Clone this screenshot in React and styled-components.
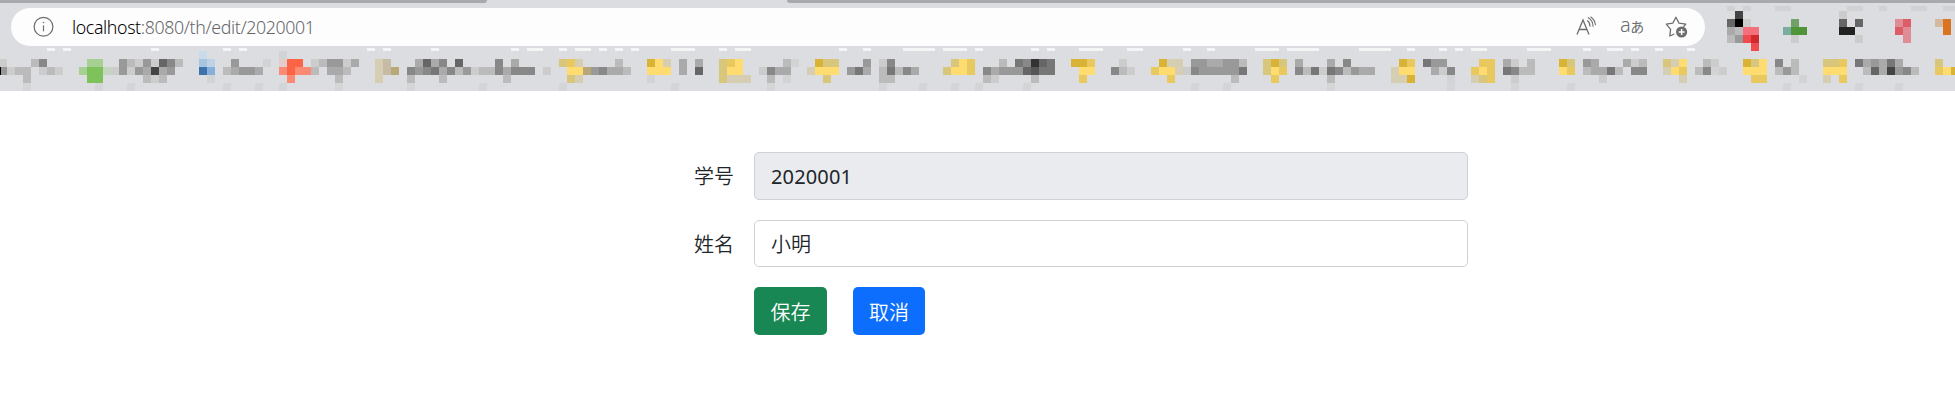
import React from 'react';
import styled, { createGlobalStyle } from 'styled-components';

const GlobalStyle = createGlobalStyle`
  * { box-sizing: border-box; }
  body {
    margin: 0;
    background: #fff;
    color: #212529;
    font-family: "Noto Sans", "Noto Sans CJK SC", sans-serif;
    font-size: 20px;
    overflow: hidden;
  }
`;

const Browser = styled.header`
  position: relative;
  height: 91px;
  background: #dcdde0;
`;

const TabStrip = styled.div`
  display: flex;
  justify-content: space-between;
  height: 3px;
`;

const TabEdge = styled.div`
  width: ${(p) => p.$width}px;
  background: #a8a9ac;
  border-radius: ${(p) => (p.$side === 'left' ? '0 0 4px 0' : '0 0 0 4px')};
`;

const AddressBar = styled.div`
  position: relative;
  display: flex;
  align-items: center;
  width: 1694px;
  height: 38px;
  margin: 5px 0 0 11px;
  padding: 0 16px 0 22px;
  border-radius: 19px;
  background: #fdfdfe;
  color: #6c6d6f;
`;

const Url = styled.span`
  flex: 1;
  margin-left: 17px;
  font-family: "Noto Sans", sans-serif;
  font-size: 17.75px;
  font-weight: 300;
  line-height: 24px;
  letter-spacing: -0.37px;
  color: #666769;
`;

const Host = styled.span`
  color: #000;
`;

const BarIcons = styled.div`
  display: flex;
  align-items: center;
  gap: 22px;
`;

const Mosaic = styled.svg`
  position: absolute;
  inset: 0;
  display: block;
`;

const Form = styled.form`
  display: grid;
  grid-template-columns: 40px 714px;
  column-gap: 20px;
  row-gap: 20px;
  margin: 61px 0 0 694px;
`;

const Label = styled.label`
  height: 48px;
  line-height: 50px;
  font-weight: 350;
  white-space: nowrap;
`;

const Input = styled.input`
  width: 100%;
  height: ${(p) => (p.readOnly ? 48 : 47)}px;
  padding: 0 16px;
  border: 1px solid #ced2d6;
  border-radius: 5px;
  outline: none;
  background: ${(p) => (p.readOnly ? '#e9ebee' : '#fff')};
  color: #212529;
  font: inherit;
  font-weight: ${(p) => (p.readOnly ? 400 : 350)};
  letter-spacing: ${(p) => (p.readOnly ? '0.15px' : '0')};
`;

const Actions = styled.div`
  grid-column: 2;
  display: flex;
  gap: 26px;
  margin-top: -1px;
`;

const Button = styled.button`
  width: ${(p) => p.$width}px;
  height: 48px;
  padding: 0;
  border: 0;
  border-radius: 5px;
  background: ${(p) => (p.$tone === 'success' ? '#198754' : '#0d6efd')};
  color: #fff;
  font: inherit;
  font-weight: 350;
`;

const COLORS = {
  G: '#7fc25b', H: '#a6d192', I: '#c3d6c0', B: '#3d73aa', C: '#88afd9', D: '#a5c5e0', E: '#bfd2e5',
  R: '#fb6545', S: '#fb8a74', T: '#e3cccb', Y: '#ffdc70', Z: '#e8c960', X: '#d8b336', W: '#d8c67d',
  V: '#d6ceb2', U: '#c6bca6', K: '#b9a877', N: '#f4707a', O: '#d2282c', P: '#ef4b4e', Q: '#4f9438',
  L: '#70a267', J: '#79ad9f', F: '#dc5c68', A: '#df8c94', t: '#d3b9a0', o: '#d97520', w: '#fdfdfe',
  d: '#d2d3d5', e: '#c9dae8',
};

const CELL = 8;

// Each entry is a row's top edge followed by [start column, cell colours] runs.
const ROWS = [
  [11, [[217, '4'], [230, 'c']]],
  [19, [[216, '60c'], [224, 'L'], [230, '6'], [232, '6'], [237, 'AF'], [242, 'to']]],
  [27, [[216, 'abNN'], [223, 'JQQ'], [230, '22'], [237, 'FA'], [243, 'o']]],
  [35, [[216, 'b9PO'], [224, 'c'], [232, 'c'], [238, 'A']]],
  [43, [[219, 'P']]],
  [51, [[25, 'e'], [35, 'd']]],
  [59, [
    [0, 'c'], [4, 'b8'], [11, 'HH'], [15, '9bc9c68b'], [25, 'DE'], [29, '9'], [33, 'd'],
    [35, 'TRR'], [39, 'cb99ca'], [47, 'VU'], [52, 'a6a8.6'], [62, '8.a'], [70, 'WZV'], [77, 'b'],
    [81, 'XYV'], [85, 'a.a'], [90, 'WZY'], [98, 'bd'], [102, 'XWW'], [108, '9'], [110, 'c8'],
    [119, 'WYZ'], [125, 'b'], [127, '78367'], [134, 'XXZ'], [140, 'c'], [145, 'XVV'],
    [149, '99aa99b'], [158, 'WXW'], [162, 'a'], [166, 'a.8'], [175, 'XZ'], [178, '799'],
    [185, 'ZZ'], [188, 'ac.b'], [195, 'XW'], [198, '9a'], [203, 'acb'], [208, 'WVY'], [213, 'bc'],
    [218, 'XWY'], [222, '8.b'], [228, 'WWZ'], [232, '7a9a7a'], [242, 'W'],
  ]],
  [67, [
    [0, '9cbb.cbc'], [10, 'HGGI'], [14, 'c9c9a4a9'], [25, 'BC'], [28, 'ba99a'], [35, 'SRSS'],
    [39, 'b.aab'], [47, 'VUK'], [51, '8987a8b9cbb'], [62, '8a888'], [68, 'c'], [71, 'YYK98aab'],
    [81, 'YYY'], [85, 'a.6'], [90, 'WYY'], [95, 'c8aa'], [101, 'VYYY'], [106, '97a'], [110, 'b7b8a'],
    [118, 'WYYZ'], [123, '8a9996577'], [135, 'YY'], [139, '8bc'], [144, 'ZYYVc8999997'],
    [158, 'WYZ'], [162, '8b7c78b9aa'], [174, 'VYY'], [179, 'ac8'], [184, 'ZYZ'], [188, '78bb'],
    [195, 'YZ'], [198, 'baa7b.88'], [208, 'VYZ'], [212, 'b8dc'], [218, 'YYY'], [222, 'b9b'],
    [228, 'YYY'], [233, 'b6a498b'], [242, 'ZYX'],
  ]],
  [75, [
    [3, 'b'], [11, 'GG'], [18, 'bcb'], [26, 'd'], [36, 'S'], [42, 'b'], [47, 'V'], [51, 'b...b'],
    [63, 'b'], [71, 'WV'], [81, 'd'], [90, 'WVVV'], [96, 'b.d'], [103, 'W'], [110, 'bb'],
    [123, 'bc'], [129, 'b'], [135, 'Z'], [146, 'Z'], [154, 'b'], [159, 'Z'], [166, 'b'],
    [174, 'VVX'], [181, 'd'], [184, 'VWZ'], [189, 'c'], [200, 'c'], [210, 'V'], [219, 'ZZ'],
    [225, 'd'], [228, 'V.Z'],
  ]],
];

const DASHES = [
  [6, 1], [8, 1], [19, 1], [28, 1], [30, 1], [46, 1], [48, 1], [54, 1], [64, 1], [66, 2], [70, 1],
  [72, 2], [75, 1], [77, 1], [79, 1], [84, 3], [90, 1], [92, 2], [105, 1], [108, 1], [113, 4],
  [118, 3], [122, 1], [129, 1], [131, 1], [135, 3], [141, 2], [148, 1], [151, 1], [157, 3],
  [161, 4], [170, 4], [176, 1], [180, 1], [182, 1], [184, 2], [191, 3], [198, 1], [201, 2],
  [204, 1], [207, 1], [211, 1],
];

const SMUDGES = [3, 12, 16, 28, 32, 35, 42, 51, 60, 70, 84, 96, 110, 115, 119, 122, 128, 149, 153, 166, 181, 189, 196, 223, 232, 237];

const fill = (c) => COLORS[c] || `#${c}${c}${c}`;

function PixelatedBookmarks() {
  return (
    <Mosaic width="1955" height="91" shapeRendering="crispEdges" aria-hidden="true">
      {DASHES.map(([c, n]) => (
        <rect key={`d${c}`} x={c * CELL - 1} y="48" width={n * CELL} height="3" fill="#f5f5f6" />
      ))}
      {SMUDGES.map((c) => (
        <rect key={`s${c}`} x={c * CELL - 1} y="83" width="8" height="8" fill="#d4d5d7" />
      ))}
      {[[216, 1], [218, 1], [222, 2], [231, 2], [235, 1], [239, 2], [243, 2]].map(([c, n]) => (
        <rect key={`e${c}`} x={c * CELL - 1} y="6" width={n * CELL} height="5" fill="#d1d2d4" />
      ))}
      {ROWS.map(([y, runs]) =>
        runs.map(([start, cells]) =>
          [...cells].map((c, i) =>
            c === '.' ? null : (
              <rect key={`${y}-${start + i}`} x={(start + i) * CELL - 1} y={y} width={CELL} height={CELL} fill={fill(c)} />
            ),
          ),
        ),
      )}
      <rect x="0" y="67" width="1" height="8" fill="#000" />
    </Mosaic>
  );
}

const InfoIcon = () => (
  <svg width="22" height="22" viewBox="0 0 22 22" fill="none" stroke="currentColor" strokeWidth="1.2">
    <circle cx="10.5" cy="10.8" r="9.4" />
    <path d="M10.5 9.4V15.3" />
    <circle cx="10.5" cy="6.6" r=".75" fill="currentColor" stroke="none" />
  </svg>
);

const ReadAloudIcon = () => (
  <svg width="22" height="22" viewBox="0 0 22 22" fill="none" stroke="currentColor" strokeWidth="1.3">
    <path d="M1 18.5 7 4 13 18.5M3.2 13.5H10.8" />
    <path d="M11.5 4.7Q14 6.5 14 10.3M12.3 1.7Q17 4.5 17 10.3M14.8 1Q19 4 19.4 8.7" strokeWidth="1.1" strokeLinecap="round" />
  </svg>
);

const Translate = styled.span`
  display: flex;
  align-items: baseline;
  width: 23px;
  margin-top: -4px;
  font-size: 20px;
  font-weight: 300;
  line-height: 22px;
  letter-spacing: -0.5px;

  small {
    font-family: "Noto Sans CJK JP", sans-serif;
    font-size: 14px;
    font-weight: 400;
    line-height: 14px;
  }
`;

const FavoriteIcon = () => (
  <svg width="24" height="24" viewBox="0 0 24 24" fill="none" stroke="currentColor" strokeWidth="1.3" strokeLinejoin="round">
    <path d="M9.3 19 4.8 21 5.6 14.3 1.3 9.2 7.8 8.2 10.9 2.2 14 8.2 20.8 9.1 18.5 11.7" />
    <circle cx="16.6" cy="17" r="5.6" fill="currentColor" stroke="none" />
    <path d="M16.6 14V20M13.6 17H19.6" stroke="#fff" strokeWidth="1.5" />
  </svg>
);

export default function App() {
  return (
    <>
      <GlobalStyle />
      <Browser>
        <TabStrip>
          <TabEdge $width={487} $side="left" />
          <TabEdge $width={1168} $side="right" />
        </TabStrip>
        <AddressBar>
          <InfoIcon />
          <Url>
            <Host>localhost</Host>:8080/th/edit/2020001
          </Url>
          <BarIcons>
            <ReadAloudIcon />
            <Translate>a<small>あ</small></Translate>
            <FavoriteIcon />
          </BarIcons>
        </AddressBar>
        <PixelatedBookmarks />
      </Browser>
      <Form>
        <Label htmlFor="student-id">学号</Label>
        <Input id="student-id" defaultValue="2020001" readOnly />
        <Label htmlFor="student-name">姓名</Label>
        <Input id="student-name" defaultValue="小明" />
        <Actions>
          <Button type="button" $tone="success" $width={73}>保存</Button>
          <Button type="button" $tone="primary" $width={72}>取消</Button>
        </Actions>
      </Form>
    </>
  );
}
